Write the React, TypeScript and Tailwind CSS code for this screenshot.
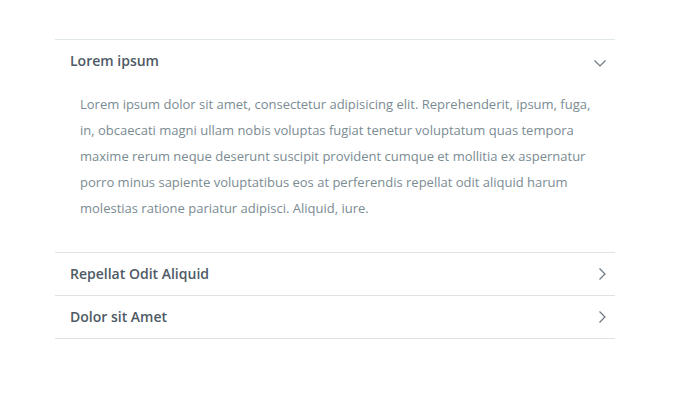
import React, { useState } from 'react';

interface Item {
  title: string;
  body: string;
}

const items: Item[] = [
  {
    title: 'Lorem ipsum',
    body:
      'Lorem ipsum dolor sit amet, consectetur adipisicing elit. Reprehenderit, ipsum, fuga, in, obcaecati magni ullam nobis voluptas fugiat tenetur voluptatum quas tempora maxime rerum neque deserunt suscipit provident cumque et mollitia ex aspernatur porro minus sapiente voluptatibus eos at perferendis repellat odit aliquid harum molestias ratione pariatur adipisci. Aliquid, iure.',
  },
  { title: 'Repellat Odit Aliquid', body: '' },
  { title: 'Dolor sit Amet', body: '' },
];

const Chevron = ({ open }: { open: boolean }) => (
  <svg
    width="14"
    height="14"
    viewBox="0 0 14 14"
    fill="none"
    stroke="#6b7781"
    strokeWidth="1.2"
    className={open ? '' : '-rotate-90'}
  >
    <path d="M1.5 4.5 L7 10 L12.5 4.5" />
  </svg>
);

const App = () => {
  const [open, setOpen] = useState(0);

  return (
    <div className="w-[700px] h-[400px] bg-white pt-[39px] font-['Open_Sans',sans-serif]">
      <div className="ml-[55px] w-[560px] border-t border-[#dfe7e9]">
        {items.map((item, i) => (
          <div key={item.title} className="border-b border-[#dfe3e5]">
            <button
              className="w-full h-[42px] flex items-center justify-between pl-[15px] pr-[8px] pb-[2px] text-left"
              onClick={() => setOpen(open === i ? -1 : i)}
            >
              <span className="text-[14px] font-semibold text-[#4e5a65]">{item.title}</span>
              <span className={open === i ? 'mt-[6px]' : 'mt-[2px] translate-x-[2px]'}>
                <Chevron open={open === i} />
              </span>
            </button>
            {open === i && (
              <p className="pl-[25px] pr-[20px] pt-[9px] pb-[31px] text-[13px] leading-[26px] text-[#7a8b92]">
                {item.body}
              </p>
            )}
          </div>
        ))}
      </div>
    </div>
  );
};

export default App;
